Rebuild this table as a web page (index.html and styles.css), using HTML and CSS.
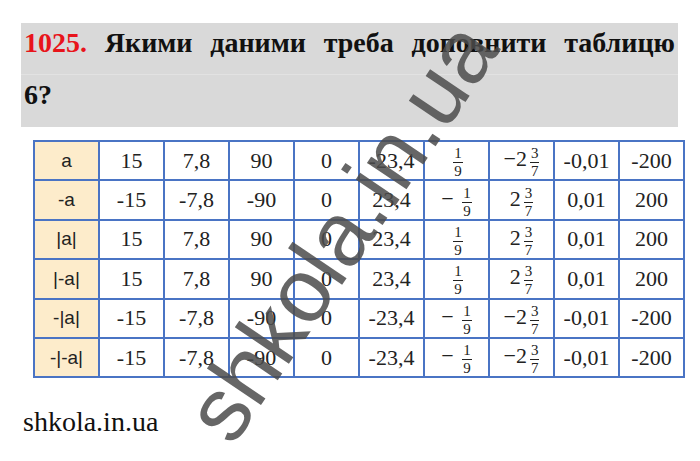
FILE: index.html
```html
<!DOCTYPE html>
<html lang="uk">
<head>
<meta charset="utf-8">
<title>1025</title>
<link rel="stylesheet" href="styles.css">
</head>
<body>
<div class="page">
  <h1 class="task">
    <span class="line first"><span class="num-red">1025.</span> Якими даними треба доповнити таблицю</span>
    <span class="line">6?</span>
  </h1>
  <table class="grid">
    <tr>
      <td class="head">a</td><td>15</td><td>7,8</td><td>90</td><td>0</td><td>-23,4</td>
      <td><span class="fr"><span class="n">1</span><span class="d">9</span></span></td>
      <td>−2<span class="fr"><span class="n">3</span><span class="d">7</span></span></td>
      <td>-0,01</td><td>-200</td>
    </tr>
    <tr>
      <td class="head">-a</td><td>-15</td><td>-7,8</td><td>-90</td><td>0</td><td>23,4</td>
      <td>− <span class="fr"><span class="n">1</span><span class="d">9</span></span></td>
      <td>2<span class="fr"><span class="n">3</span><span class="d">7</span></span></td>
      <td>0,01</td><td>200</td>
    </tr>
    <tr>
      <td class="head">|a|</td><td>15</td><td>7,8</td><td>90</td><td>0</td><td>23,4</td>
      <td><span class="fr"><span class="n">1</span><span class="d">9</span></span></td>
      <td>2<span class="fr"><span class="n">3</span><span class="d">7</span></span></td>
      <td>0,01</td><td>200</td>
    </tr>
    <tr>
      <td class="head">|-a|</td><td>15</td><td>7,8</td><td>90</td><td>0</td><td>23,4</td>
      <td><span class="fr"><span class="n">1</span><span class="d">9</span></span></td>
      <td>2<span class="fr"><span class="n">3</span><span class="d">7</span></span></td>
      <td>0,01</td><td>200</td>
    </tr>
    <tr>
      <td class="head">-|a|</td><td>-15</td><td>-7,8</td><td>-90</td><td>0</td><td>-23,4</td>
      <td>− <span class="fr"><span class="n">1</span><span class="d">9</span></span></td>
      <td>−2<span class="fr"><span class="n">3</span><span class="d">7</span></span></td>
      <td>-0,01</td><td>-200</td>
    </tr>
    <tr>
      <td class="head">-|-a|</td><td>-15</td><td>-7,8</td><td>-90</td><td>0</td><td>-23,4</td>
      <td>− <span class="fr"><span class="n">1</span><span class="d">9</span></span></td>
      <td>−2<span class="fr"><span class="n">3</span><span class="d">7</span></span></td>
      <td>-0,01</td><td>-200</td>
    </tr>
  </table>
  <p class="site">shkola.in.ua</p>
  <div class="wm">shkola.in.ua</div>
</div>
</body>
</html>
```
FILE: styles.css
```css
html, body {
  margin: 0;
  padding: 0;
  background: #fff;
}
.page {
  position: relative;
  width: 700px;
  height: 461px;
  overflow: hidden;
  font-family: "Liberation Serif", "Times New Roman", serif;
  color: #111;
}
.task {
  margin: 23px 22px 0 21px;
  background: #d9d9d9;
  font-size: 28px;
  font-weight: 700;
}
.line {
  display: block;
  line-height: 31px;
  padding: 4px 3px 17px 3px;
  text-align: left;
}
.line.first {
  text-align: justify;
  text-align-last: justify;
  border-bottom: 1px solid #e2e2e2;
  padding-bottom: 16px;
}
.num-red {
  color: #e8141b;
}
.grid {
  margin: 13px 0 0 33px;
  border-collapse: collapse;
  table-layout: fixed;
  width: 632px;
}
.grid td {
  border: 2px solid #4a74c4;
  width: 63px;
  height: 37.4px;
  padding: 0;
  text-align: center;
  vertical-align: middle;
  font-size: 22px;
  color: #222;
  white-space: nowrap;
}
.grid td.head {
  background: #fdeccb;
  font-family: "Liberation Sans", Arial, sans-serif;
  font-size: 19px;
}
.fr {
  display: inline-flex;
  flex-direction: column;
  align-items: center;
  vertical-align: middle;
  font-size: 15px;
  line-height: 15px;
  margin-left: 3px;
  position: relative;
  top: 2px;
}
.fr .n {
  border-bottom: 1px solid #222;
  padding: 0 1px 1px;
}
.fr .d {
  padding-top: 1px;
}
.site {
  margin: 28px 0 0 23px;
  font-size: 28px;
  line-height: 32px;
  color: #111;
}
.wm {
  position: absolute;
  left: 341px;
  top: 231px;
  transform: translate(-50%, -50%) rotate(-56deg);
  font-family: "Liberation Sans", Arial, sans-serif;
  font-size: 90px;
  line-height: 1;
  white-space: nowrap;
  color: rgba(75, 75, 75, 0.85);
  pointer-events: none;
}
```
